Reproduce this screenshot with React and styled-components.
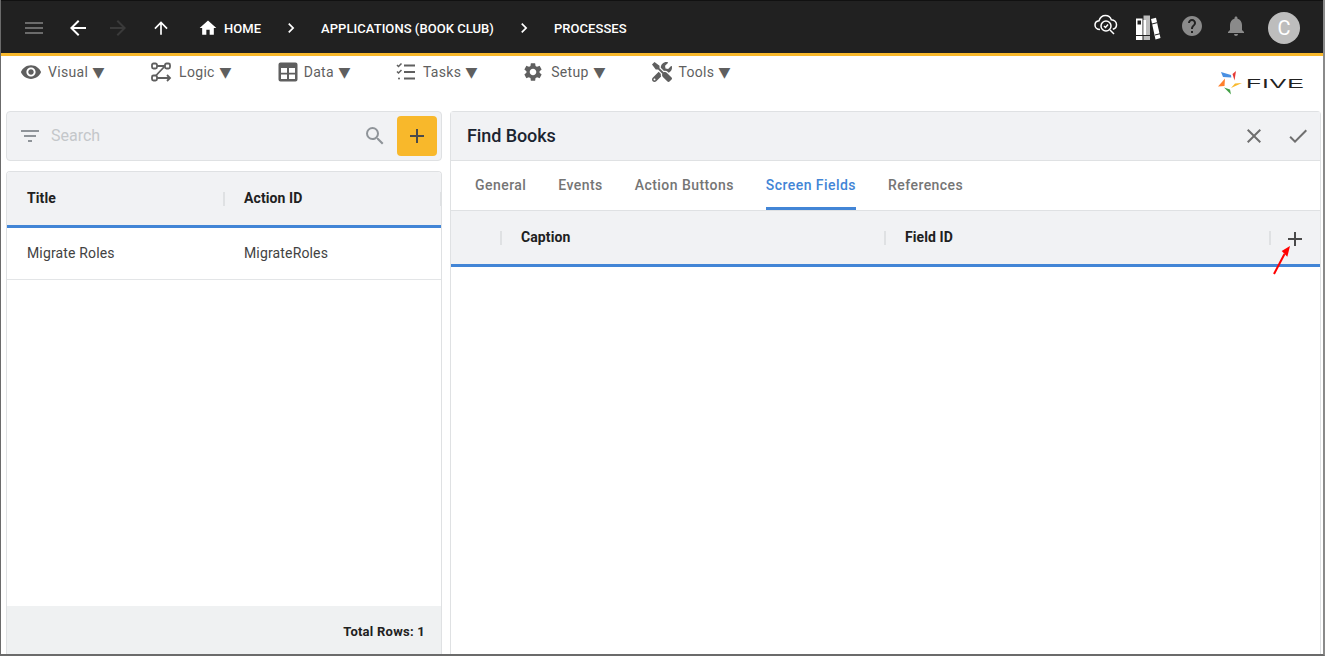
import React from "react";
import styled, { createGlobalStyle } from "styled-components";
import {
  MdMenu,
  MdArrowBack,
  MdArrowForward,
  MdArrowUpward,
  MdHome,
  MdChevronRight,
  MdHelp,
  MdNotifications,
  MdVisibility,
  MdSettings,
  MdFilterList,
  MdSearch,
  MdAdd,
  MdClose,
  MdCheck,
} from "react-icons/md";
import { FaTools } from "react-icons/fa";

const GlobalStyle = createGlobalStyle`
  html, body { margin: 0; padding: 0; background: #fff; }
  body { font-family: Roboto, "Liberation Sans", sans-serif; overflow: hidden; }
  * { box-sizing: border-box; }
`;

const Page = styled.div`
  width: 1325px;
  height: 656px;
  display: flex;
  flex-direction: column;
  border-left: 1px solid #6b6b6b;
  border-right: 2px solid #8a8a8a;
  border-bottom: 2px solid #6b6b6b;
  overflow: hidden;
`;

const Header = styled.header`
  height: 56px;
  flex: none;
  background: #212121;
  border-top: 1px solid #111;
  border-bottom: 3px solid #f8b82b;
  display: flex;
  align-items: center;
  padding: 2px 23px 0 21px;
`;

const NavIcon = styled.span`
  display: flex;
  justify-content: center;
  width: 24px;
  margin-right: ${(p) => p.$gap}px;
  color: ${(p) => p.$color};
  font-size: ${(p) => p.$size || 24}px;
`;

const Crumb = styled.span`
  color: #fff;
  font-size: 13px;
  font-weight: 500;
  letter-spacing: 0.05px;
  margin-right: ${(p) => p.$gap}px;
`;

const CrumbIcon = styled.span`
  display: flex;
  color: #fff;
  font-size: 20px;
  margin-right: ${(p) => p.$gap}px;
`;

const HeaderRight = styled.div`
  margin-left: auto;
  display: flex;
  align-items: center;
`;

const HeaderIcon = styled.span`
  display: flex;
  margin-right: ${(p) => p.$gap}px;
  margin-bottom: ${(p) => p.$lift}px;
  color: ${(p) => p.$color};
  font-size: 24px;
`;

const Avatar = styled.div`
  width: 32px;
  height: 32px;
  border-radius: 50%;
  background: #bdbdbd;
  color: #fff;
  font-size: 20px;
  display: flex;
  align-items: center;
  justify-content: center;
`;

const Toolbar = styled.div`
  height: 55px;
  flex: none;
  display: flex;
  align-items: flex-start;
  padding: 4px 0 0 19px;
  position: relative;
`;

const MenuItem = styled.div`
  display: flex;
  align-items: center;
  height: 24px;
  color: #5f5f5f;
  font-size: 14px;
  letter-spacing: 0.3px;
  margin-right: ${(p) => p.$gap}px;
  svg { flex: none; margin-right: ${(p) => p.$iconGap}px; }
`;

const Caret = styled.span`
  width: 13px;
  margin-left: 4px;
  text-align: center;
  font-size: 14px;
  letter-spacing: 0;
  font-family: "DejaVu Sans", sans-serif;
  line-height: 24px;
  transform: scaleX(1.1);
`;

const Logo = styled.div`
  position: absolute;
  top: 15px;
  right: 18px;
  display: flex;
  align-items: center;
`;

const LogoWord = styled.span`
  width: 59px;
  margin-left: 4px;
  white-space: nowrap;
  font-family: "Liberation Sans", sans-serif;
  font-size: 13px;
  letter-spacing: 0.5px;
  color: #212121;
  transform: scaleX(1.9);
  transform-origin: left center;
`;

const Content = styled.div`
  flex: 1;
  min-height: 0;
  display: flex;
  padding-left: 5px;
  gap: 8px;
`;

const LeftColumn = styled.div`
  width: 436px;
  flex: none;
  display: flex;
  flex-direction: column;
  gap: 10px;
`;

const SearchCard = styled.div`
  height: 50px;
  flex: none;
  background: #f1f2f4;
  border: 1px solid #dfe1e3;
  border-radius: 4px;
  display: flex;
  align-items: center;
  padding: 0 4px 0 11px;
  color: #8f9499;
  svg { margin-bottom: 1px; }
`;

const SearchText = styled.span`
  color: #c4c7ca;
  font-size: 16px;
  margin: 0 0 2px 9px;
  flex: 1;
`;

const AddButton = styled.div`
  width: 40px;
  height: 40px;
  background: #f8b82b;
  border-radius: 4px;
  color: #4a4a4a;
  display: flex;
  align-items: center;
  justify-content: center;
  margin-left: 10px;
`;

const TableCard = styled.div`
  flex: 1;
  min-height: 0;
  border: 1px solid #dfe1e3;
  border-bottom: none;
  border-radius: 4px 4px 0 0;
  display: flex;
  flex-direction: column;
  overflow: hidden;
`;

const HeadRow = styled.div`
  height: 56px;
  flex: none;
  background: #f1f2f4;
  border-bottom: 3px solid #4285d6;
  display: flex;
  align-items: center;
`;

const HeadCell = styled.div`
  width: ${(p) => p.$width}px;
  flex: none;
  height: 14px;
  display: flex;
  align-items: center;
  padding: 0 0 2px ${(p) => p.$pad}px;
  font-size: 14px;
  font-weight: 700;
  letter-spacing: 0.1px;
  color: #212121;
  border-right: ${(p) => (p.$rule ? "2px solid #dfe1e3" : "none")};
`;

const BodyRow = styled.div`
  height: 52px;
  flex: none;
  display: flex;
  align-items: center;
  padding-bottom: 2px;
  border-bottom: 1px solid #e3e5e7;
`;

const BodyCell = styled.div`
  width: ${(p) => p.$width}px;
  padding-left: 20px;
  font-size: 14px;
  letter-spacing: 0.15px;
  color: #424242;
`;

const TableBody = styled.div`
  flex: 1;
`;

const TableFooter = styled.div`
  height: 48px;
  flex: none;
  background: #eff1f2;
  display: flex;
  align-items: center;
  justify-content: flex-end;
  padding: 3px 16px 0 0;
  font-size: 13px;
  font-weight: 700;
  letter-spacing: 0.25px;
  color: #212121;
`;

const RightPanel = styled.div`
  width: 871px;
  flex: none;
  border: 1px solid #dfe1e3;
  border-bottom: none;
  border-radius: 4px 4px 0 0;
  display: flex;
  flex-direction: column;
`;

const PanelTitleBar = styled.div`
  height: 49px;
  flex: none;
  background: #f1f2f4;
  border-bottom: 1px solid #dfe1e3;
  display: flex;
  align-items: center;
  padding: 0 10px 0 16px;
`;

const PanelTitle = styled.span`
  flex: 1;
  margin-bottom: 2px;
  font-size: 18px;
  font-weight: 500;
  letter-spacing: -0.1px;
  color: #1b2430;
`;

const PanelAction = styled.span`
  display: flex;
  color: #6f6f6f;
  margin-left: ${(p) => p.$gap}px;
`;

const Tabs = styled.div`
  height: 50px;
  flex: none;
  display: flex;
  padding-left: 24px;
  gap: 32px;
  border-bottom: 1px solid #dfe1e3;
`;

const Tab = styled.div`
  height: 49px;
  display: flex;
  align-items: center;
  padding-bottom: 2px;
  font-size: 14px;
  font-weight: 500;
  letter-spacing: 0.45px;
  color: ${(p) => (p.$active ? "#4285d6" : "#757575")};
  border-bottom: 3px solid ${(p) => (p.$active ? "#4285d6" : "transparent")};
  border-top: 3px solid transparent;
`;

const FieldHead = styled.div`
  height: 56px;
  flex: none;
  background: #f1f2f4;
  border-bottom: 3px solid #4285d6;
  display: flex;
  align-items: center;
`;

const FieldAdd = styled.span`
  position: relative;
  display: flex;
  margin-left: 12px;
  margin-top: 3px;
  color: #4a4a4a;
`;

const Arrow = styled.svg`
  position: absolute;
  left: -13px;
  top: 17px;
`;

const LogicIcon = () => (
  <svg width="22" height="22" viewBox="0 0 22 22" fill="none" stroke="#5f5f5f" strokeWidth="1.8">
    <rect x="2" y="2.5" width="5" height="5" rx="1.5" />
    <rect x="15" y="2.5" width="5" height="5" rx="1.5" />
    <rect x="2" y="14.5" width="5" height="5" rx="1.5" />
    <path d="M7 5h8M14.5 5.5L6 14.5M7 17h12M17 14l3 3-3 3" />
  </svg>
);

const DataIcon = () => (
  <svg width="22" height="22" viewBox="0 0 22 22">
    <path
      fill="#5f5f5f"
      fillRule="evenodd"
      d="M3.500 1.500h15a2 2 0 0 1 2 2v15a2 2 0 0 1-2 2h-15a2 2 0 0 1-2-2v-15a2 2 0 0 1 2-2zM4 7v4.700h6V7zm8 0v4.700h6V7zM4 13.500V18h6v-4.500zm8 0V18h6v-4.500z"
    />
  </svg>
);

const TasksIcon = () => (
  <svg width="22" height="22" viewBox="0 0 22 22" fill="none" stroke="#5f5f5f" strokeWidth="2">
    <path d="M9 4.500h11M9 11h11M9 17.500h11" />
    <path strokeWidth="1.500" d="M2 4l1.500 1.500L6.500 2.500M2 10.500L3.500 12l3-3" />
    <circle cx="4" cy="17.500" r="1" fill="#5f5f5f" stroke="none" />
  </svg>
);

const CloudSearchIcon = () => (
  <svg width="24" height="24" viewBox="0 0 24 24" fill="none" stroke="#fff" strokeWidth="1.500">
    <path d="M6 16.500C3 16.500 1 14.500 1 12c0-2.300 1.700-4 4-4.300C6 4.500 8.500 2.500 11.500 2.500c2.700 0 5 1.700 5.800 4.200 3 .2 5.200 2.300 5.200 5 0 2.300-1.500 4-3.700 4.600" />
    <circle cx="12" cy="13" r="5" />
    <path d="M10 13l1.500 1.500 2.500-3M16 17l4 4" />
  </svg>
);

const BooksIcon = () => (
  <svg width="26" height="26" viewBox="0 0 26 26">
    <path fill="#fff" d="M1 3.500h6.500V25H1z" />
    <rect fill="#212121" x="2.500" y="5.500" width="3.500" height="4" />
    <path fill="#bdbdbd" d="M8.500 0.500h6.500V25H8.500z" />
    <path fill="#fff" d="M8.500 5h2.500v15H8.500z" />
    <path fill="#fff" d="M16 4l5-1.300 4.500 20.300-5 1.400z" />
    <path stroke="#212121" strokeWidth="1" fill="none" d="M1 20.500h14M17 9l5-1.300M20 20l5-1.300" />
  </svg>
);

const Pinwheel = () => (
  <svg width="24" height="24" viewBox="0 0 24 24">
    <path fill="#4a90e2" d="M3 1l10 3 .3 2.500-8.300-.5z" />
    <path fill="#e53935" d="M18 0l-1.500 9.500L14.500 3z" />
    <path fill="#f8b82b" d="M24 12l-11 5 4-4.500z" />
    <path fill="#43a047" d="M13 23.500L6 16.500l6 2z" />
    <path fill="#ff7f2a" d="M0 15.500L7 7.500l-.5 7.500z" />
  </svg>
);

const App = () => (
  <>
    <GlobalStyle />
    <Page>
      <Header>
        <NavIcon $color="#6b6b6b" $gap={20}><MdMenu /></NavIcon>
        <NavIcon $color="#fff" $gap={16}><MdArrowBack /></NavIcon>
        <NavIcon $color="#3a3a3a" $gap={19}><MdArrowForward /></NavIcon>
        <NavIcon $color="#fff" $gap={25} $size={20}><MdArrowUpward /></NavIcon>
        <CrumbIcon $gap={6}><MdHome /></CrumbIcon>
        <Crumb $gap={20}>HOME</Crumb>
        <CrumbIcon $gap={20}><MdChevronRight /></CrumbIcon>
        <Crumb $gap={20}>APPLICATIONS (BOOK CLUB)</Crumb>
        <CrumbIcon $gap={20}><MdChevronRight /></CrumbIcon>
        <Crumb>PROCESSES</Crumb>
        <HeaderRight>
          <HeaderIcon $gap={17} $lift={6}><CloudSearchIcon /></HeaderIcon>
          <HeaderIcon $gap={19} $lift={0}><BooksIcon /></HeaderIcon>
          <HeaderIcon $color="#8a8a8a" $gap={20} $lift={4}><MdHelp /></HeaderIcon>
          <HeaderIcon $color="#8a8a8a" $gap={20} $lift={4}><MdNotifications /></HeaderIcon>
          <Avatar>C</Avatar>
        </HeaderRight>
      </Header>
      <Toolbar>
        <MenuItem $gap={45} $iconGap={6}><MdVisibility size={22} />Visual<Caret>▼</Caret></MenuItem>
        <MenuItem $gap={45} $iconGap={7}><LogicIcon />Logic<Caret>▼</Caret></MenuItem>
        <MenuItem $gap={44} $iconGap={5}><DataIcon />Data<Caret>▼</Caret></MenuItem>
        <MenuItem $gap={44} $iconGap={6}><TasksIcon />Tasks<Caret>▼</Caret></MenuItem>
        <MenuItem $gap={46} $iconGap={7}><MdSettings size={22} />Setup<Caret>▼</Caret></MenuItem>
        <MenuItem $iconGap={7}><FaTools size={20} />Tools<Caret>▼</Caret></MenuItem>
        <Logo>
          <Pinwheel />
          <LogoWord>FIVE</LogoWord>
        </Logo>
      </Toolbar>
      <Content>
        <LeftColumn>
          <SearchCard>
            <MdFilterList size={24} />
            <SearchText>Search</SearchText>
            <MdSearch size={24} />
            <AddButton><MdAdd size={24} /></AddButton>
          </SearchCard>
          <TableCard>
            <HeadRow>
              <HeadCell $width={218} $pad={20} $rule>Title</HeadCell>
              <HeadCell $width={217} $pad={19} $rule>Action ID</HeadCell>
            </HeadRow>
            <TableBody>
              <BodyRow>
                <BodyCell $width={217}>Migrate Roles</BodyCell>
                <BodyCell $width={217}>MigrateRoles</BodyCell>
              </BodyRow>
            </TableBody>
            <TableFooter>Total Rows: 1</TableFooter>
          </TableCard>
        </LeftColumn>
        <RightPanel>
          <PanelTitleBar>
            <PanelTitle>Find Books</PanelTitle>
            <PanelAction><MdClose size={24} /></PanelAction>
            <PanelAction $gap={20}><MdCheck size={24} /></PanelAction>
          </PanelTitleBar>
          <Tabs>
            <Tab>General</Tab>
            <Tab>Events</Tab>
            <Tab>Action Buttons</Tab>
            <Tab $active>Screen Fields</Tab>
            <Tab>References</Tab>
          </Tabs>
          <FieldHead>
            <HeadCell $width={51} $rule />
            <HeadCell $width={384} $pad={19} $rule>Caption</HeadCell>
            <HeadCell $width={385} $pad={19} $rule>Field ID</HeadCell>
            <FieldAdd>
              <MdAdd size={24} />
              <Arrow width="24" height="32" viewBox="0 0 24 32">
                <path d="M4 30L14.500 10" stroke="#f00" strokeWidth="2" />
                <path d="M20 2l-8.300 5 5.600 5.700z" fill="#f00" />
              </Arrow>
            </FieldAdd>
          </FieldHead>
        </RightPanel>
      </Content>
    </Page>
  </>
);

export default App;
